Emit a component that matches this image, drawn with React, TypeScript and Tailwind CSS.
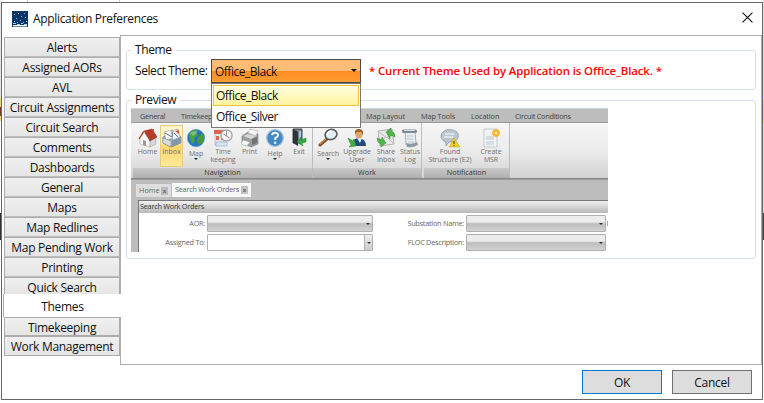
import React from "react";

const tabs = [
  ["Alerts", "h-5"], ["Assigned AORs", "h-5"], ["AVL", "h-5"], ["Circuit Assignments", "h-5"],
  ["Circuit Search", "h-5"], ["Comments", "h-5"], ["Dashboards", "h-5"], ["General", "h-5"],
  ["Maps", "h-5"], ["Map Redlines", "h-5"], ["Map Pending Work", "h-5"], ["Printing", "h-5"],
  ["Quick Search", "h-[17px]"], ["Themes", "h-[23px]"], ["Timekeeping", "h-[19px]"], ["Work Management", "h-5"],
];

const svg = "h-5 w-5 shrink-0";

const HomeIcon = () => (
  <svg viewBox="0 0 20 20" className={svg}>
    <path d="M2 10 6 5 12 12V19L2 16Z" fill="#fafafa" stroke="#aaa" strokeWidth=".6" />
    <path d="M12 12 18 9V16L12 19Z" fill="#d5d5d5" stroke="#999" strokeWidth=".5" />
    <path d="M6 3 14 1 19 9 12 13Z" fill="#b43d25" stroke="#8b2918" strokeWidth=".5" />
    <path d="M6 3 1 11" stroke="#a8472f" strokeWidth="1.4" />
    <path d="M5 12 8 13V18L5 17Z" fill="#999" /><path d="M14 1h2v3z" fill="#b85b45" />
  </svg>
);
const InboxIcon = () => (
  <svg viewBox="0 0 20 20" className={svg}>
    <path d="M1 9 12 5 19 9V15L9 19 1 15Z" fill="#9cabb5" stroke="#6f7d88" strokeWidth=".7" />
    <path d="M2 4 10 2 12 10 4 12Z" fill="#f8f8f8" stroke="#999" strokeWidth=".6" />
    <path d="M9 3 16 1 18 9 11 12Z" fill="#eef2f5" stroke="#7d96a8" strokeWidth=".6" />
    <path d="M3 5 10 9 11 3M12 5l4 4" stroke="#63788a" fill="none" />
    <path d="M13 3l4-1v4z" fill="#d4573c" /><path d="M1 10 9 13V19L1 15Z" fill="#d6dce0" stroke="#79858d" strokeWidth=".5" />
    <path d="M10 13 18 10V15L10 18Z" fill="#8297a7" />
  </svg>
);
const GlobeIcon = () => (
  <svg viewBox="0 0 20 20" className={svg}>
    <circle cx="10" cy="10" r="8.7" fill="#2675bf" stroke="#70a5c8" strokeWidth=".6" />
    <path d="M3 6Q7 1 12 2L10 5 12 7 8 10 9 13 6 16 4 11Z" fill="#49a443" />
    <path d="M12 9 17 5Q20 10 16 15L13 17 11 13Z" fill="#48993a" />
    <path d="M4 5Q8 2 12 4L7 8Z" fill="#9bd4b2" opacity=".6" />
  </svg>
);
const TimeIcon = () => (
  <svg viewBox="0 0 20 20" className={svg}>
    <path d="M2 2h9v15H2z" fill="#e7eaf0" stroke="#aaa" strokeWidth=".6" />
    <path d="M1 2h10v4H1zM3 8h3v4H3zM8 9h3v3H8z" fill="#dc6550" />
    <path d="M3 14h11v4H3z" fill="#d7e5f3" stroke="#89a5c5" strokeWidth=".6" />
    <circle cx="13.5" cy="7.5" r="5.5" fill="#f7f7f7" stroke="#a7a7a7" strokeWidth="1.4" />
    <path d="M13.5 3v5l3 2M13.5 8l-3-2" stroke="#777" strokeWidth=".8" fill="none" />
  </svg>
);
const PrintIcon = () => (
  <svg viewBox="0 0 20 20" className={svg}>
    <path d="M2 8 8 4 18 6V16L11 19 2 15Z" fill="#9b9e9f" stroke="#777" strokeWidth=".6" />
    <path d="M8 5 10 1 18 3 16 8Z" fill="#f6f6f6" stroke="#aaa" strokeWidth=".6" />
    <path d="M3 8 8 6 16 8 11 11Z" fill="#d5d7d8" /><path d="M3 12 10 14 7 18 1 16Z" fill="#fafafa" stroke="#999" strokeWidth=".5" />
    <path d="M12 11 17 9V15L12 17Z" fill="#6e7476" />
  </svg>
);
const HelpIcon = () => (
  <svg viewBox="0 0 20 20" className={svg}>
    <circle cx="10" cy="10" r="8.3" fill="#4189c7" stroke="#a2bfd6" strokeWidth="1.3" />
    <path d="M7 7.2Q7.5 4.5 10.5 4.7Q13.5 5 13 7.7Q12.6 9 10.3 10V12" fill="none" stroke="#fff" strokeWidth="1.9" />
    <circle cx="10.2" cy="14.8" r="1.2" fill="#fff" />
  </svg>
);
const ExitIcon = () => (
  <svg viewBox="0 0 20 20" className={svg}>
    <path d="M4 1h9v14H4z" fill="#6e8294" stroke="#444" /><path d="M4 1 9 4V18L4 15Z" fill="#303438" />
    <path d="M10 3h2v8h-2z" fill="#a8ccdd" /><path d="M17 10 12 12V9L8 14l6 4-1-3 4-1Z" fill="#38a641" stroke="#278735" strokeWidth=".5" />
  </svg>
);
const SearchIcon = () => (
  <svg viewBox="0 0 20 20" className={svg}>
    <path d="m9 11-7 6" stroke="#8b552b" strokeWidth="3" strokeLinecap="round" />
    <path d="m8 11-6 5" stroke="#d39a5c" strokeWidth="1" />
    <ellipse cx="13" cy="6.5" rx="6" ry="5" transform="rotate(-20 13 6.5)" fill="#e3edf4" stroke="#555b60" strokeWidth="1.6" />
    <path d="M9 7q1-4 5-4" stroke="#fff" strokeWidth="1.4" fill="none" />
  </svg>
);
const UserIcon = () => (
  <svg viewBox="0 0 20 20" className={svg}>
    <path d="M5 18Q5 10 12 10Q19 11 19 18Z" fill="#214d7c" /><path d="M10 10l3 5 2-5z" fill="#e8eef4" />
    <ellipse cx="12" cy="6" rx="3.8" ry="4.5" fill="#dea872" /><path d="M8 6Q7 1 12 1Q17 1 16 7L14 4 10 4Z" fill="#9c6728" />
    <path d="M1 10l5 3 1-2 2 7-7 1 2-2Z" fill="#42ac3d" stroke="#2a872b" strokeWidth=".5" />
  </svg>
);
const ShareIcon = () => (
  <svg viewBox="0 0 20 20" className={svg}>
    <path d="M2 3 16 1 18 16 4 18Z" fill="#e8e8e8" stroke="#999" strokeWidth=".7" /><path d="m3 4 8 6 5-8M4 17l5-8M17 15l-6-6" stroke="#aaa" strokeWidth=".7" fill="none" />
    <path d="m10 4 5-4v3q4 1 4 6-3-2-5-1v3Z M10 15l-5 4v-3q-4-1-4-6 3 2 5 1v-2Z" fill="#51b649" stroke="#318a31" strokeWidth=".5" />
  </svg>
);
const StatusIcon = () => (
  <svg viewBox="0 0 20 20" className={svg}>
    <path d="M5 3h10l1 13-10 1Z" fill="#e9edf0" stroke="#8795a0" strokeWidth=".7" />
    <rect x="2" y="1.5" width="15" height="3.5" rx="1.5" fill="#7d8a94" /><path d="M4 2.5h11" stroke="#d8dfe4" />
    <path d="M7 8h6M7 11h6M8 14h6" stroke="#aebac2" strokeWidth=".8" /><path d="M6 15q6 2 11-1l1 3q-5 3-11 2Z" fill="#8e9ba6" />
  </svg>
);
const FoundIcon = () => (
  <svg viewBox="0 0 20 20" className={svg}>
    <path d="M4 13Q-1 10 2 5Q6 0 13 2Q20 4 18 10Q16 14 9 14L6 18V14Z" fill="#bbc6cf" stroke="#8c9faf" strokeWidth=".8" />
    <path d="M5 6h9M4 9h9" stroke="#e9eef2" strokeWidth="1.3" /><path d="m14 10 6 9H9Z" fill="#f0d421" stroke="#c1a51c" strokeWidth=".6" />
    <path d="M14 13v3M14 17v1" stroke="#333" />
  </svg>
);
const CreateIcon = () => (
  <svg viewBox="0 0 20 20" className={svg}>
    <path d="M3 1h13v18H3z" fill="#f0f2f3" stroke="#b3babf" strokeWidth=".7" /><path d="M5 9h8M5 11h8M5 14h8M5 16h8" stroke="#b5c3cd" strokeWidth=".9" />
    <circle cx="15" cy="5" r="3.7" fill="#ffb82d" /><path d="M15 1v8M11 5h8M12.5 2.5l5 5M17.5 2.5l-5 5" stroke="#f5a61f" strokeWidth=".9" /><circle cx="15" cy="5" r="1.5" fill="#fff2a8" />
  </svg>
);

type Tool = { icon: () => React.JSX.Element; a: string; b?: string; w: string; arrow?: boolean; on?: boolean };
const nav: Tool[] = [
  { icon: HomeIcon, a: "Home", w: "w-[25px]" }, { icon: InboxIcon, a: "Inbox", w: "w-[23px]", on: true },
  { icon: GlobeIcon, a: "Map", w: "w-[26px]", arrow: true }, { icon: TimeIcon, a: "Time", b: "keeping", w: "w-[28px]" },
  { icon: PrintIcon, a: "Print", w: "w-[25px]" }, { icon: HelpIcon, a: "Help", w: "w-[26px]", arrow: true },
  { icon: ExitIcon, a: "Exit", w: "w-[22px]" },
];
const work: Tool[] = [
  { icon: SearchIcon, a: "Search", w: "w-[26px]", arrow: true }, { icon: UserIcon, a: "Upgrade", b: "User", w: "w-[32px]" },
  { icon: ShareIcon, a: "Share", b: "Inbox", w: "w-[26px]" }, { icon: StatusIcon, a: "Status", b: "Log", w: "w-[22px]" },
];
const notify: Tool[] = [
  { icon: FoundIcon, a: "Found", b: "Structure (E2)", w: "w-[48px]" }, { icon: CreateIcon, a: "Create", b: "MSR", w: "w-[34px]" },
];

function Group({ items, name, width }: { items: Tool[]; name: string; width: string }) {
  return (
    <div className={`flex h-[55px] shrink-0 flex-col border-r border-[#bcbcbc] ${width}`}>
      <div className="flex h-[45px] shrink-0 pl-0.5 pt-[2px]">
        {items.map((t) => (
          <div key={t.a} className={`flex h-[42px] shrink-0 flex-col items-center border pt-[2px] text-[7px] leading-[8px] tracking-[-.08px] whitespace-nowrap text-[#707070] ${t.w} ${t.on ? "border-[#e8cb7b] bg-linear-to-b from-[#fff4c9] from-40% via-[#ffd767] via-50% to-[#ffe998]" : "border-transparent"}`}>
            <t.icon />
            <span className={t.arrow ? "mt-[2px]" : ""}>{t.a}</span>
            {t.b && <span>{t.b}</span>}
            {t.arrow && <i className="border-x-2 border-t-2 border-x-transparent border-t-[#222]" />}
          </div>
        ))}
      </div>
      <div className="flex h-[10px] items-center justify-center bg-linear-to-b from-[#c8c8c8] to-[#b0b0b0] text-[7.3px] leading-none text-[#333]">{name}</div>
    </div>
  );
}

function Field({ white = false, w }: { white?: boolean; w: string }) {
  return (
    <div className={`flex h-[17px] shrink-0 justify-end rounded-[1px] border border-[#b0b0b0] ${w} ${white ? "bg-white" : "bg-linear-to-b from-[#ececec] from-40% via-[#bdbdbd] via-52% to-[#d3d3d3]"}`}>
      <div className={`flex w-2 items-center justify-center ${white ? "border-l border-[#b0b0b0] bg-linear-to-b from-[#eee] to-[#ccc]" : ""}`}>
        <i className="border-x-2 border-t-2 border-x-transparent border-t-[#333]" />
      </div>
    </div>
  );
}

function Preview() {
  return (
    <div className="flex h-[144px] w-[477px] flex-col overflow-hidden bg-[#bdbdbd] text-[7.3px] leading-none tracking-[-.25px] text-[#444]">
      <div className="flex h-[14px] items-center border-t border-[#cbd4da] pt-[3px] whitespace-nowrap">
        <span className="ml-[9px] w-[41px]">General</span><span className="w-[185px]">Timekeeping</span>
        <span className="w-[55px] tracking-[-.1px]">Map Layout</span><span className="w-[50px] tracking-[-.1px]">Map Tools</span><span className="w-[44px] tracking-[-.1px]">Location</span><span>Circuit Conditions</span>
      </div>
      <div className="flex h-[57px] shrink-0 border-t border-b border-t-[#999] border-b-[#888] bg-linear-to-b from-[#f6f6f6] via-[#ececec] to-[#d2d2d2] pl-[2px] tracking-normal">
        <Group items={nav} name="Navigation" width="w-[180px]" />
        <Group items={work} name="Work" width="w-[109px]" />
        <div className="w-[2px]" />
        <Group items={notify} name="Notification" width="w-[86px]" />
      </div>
      <div className="flex h-[18px] shrink-0 items-end border-t border-[#999] pl-[5px]">
        <div className="flex h-[13px] w-[35px] items-center justify-between bg-[#dedede] px-[3px] text-[#666]"><span className="tracking-normal">Home</span><b className="bg-[#bbb] px-[2px] text-[6px] leading-[8px]">x</b></div>
        <div className="ml-px flex h-[14px] w-[79px] items-center justify-between bg-[#f7f7f7] px-[3px] text-[#666] whitespace-nowrap"><span>Search Work Orders</span><b className="bg-[#c4c4c4] px-[2px] text-[6px] leading-[8px]">x</b></div>
      </div>
      <div className="flex-1 pt-[3px] pl-[7px]">
        <div className="h-full border-t border-l border-[#777] bg-white">
          <div className="flex h-3 items-center bg-linear-to-b from-[#f1f1f1] to-[#b8b8b8] pl-px text-[#333]">Search Work Orders</div>
          <div className="mt-[2px] flex flex-col gap-[2px]">
            {[["AOR:", "Substation Name:"], ["Assigned To:", "FLOC Description:"]].map(([a, b], i) => (
              <div key={a} className="flex items-center whitespace-nowrap text-[#666]">
                <span className="w-[66px] text-right">{a}</span><span className="w-[2px]" /><Field w="w-[166px]" white={i === 1} />
                <span className="w-[91px] text-right">{b}</span><span className="w-[2px]" /><Field w="w-[140px]" />
                {i === 0 && <span className="ml-[1px] h-[5px] w-px bg-[#df967a]" />}
              </div>
            ))}
          </div>
        </div>
      </div>
    </div>
  );
}

export default function App() {
  return (
    <div className="flex h-[403px] w-[764px] overflow-hidden bg-white font-['Open_Sans','Noto_Sans',sans-serif] text-[12px] leading-4 text-[#111]">
      <aside className="flex w-px shrink-0 flex-col">
        <i className="h-[98px] bg-[#e5e5e5]" /><i className="h-[9px] bg-[#efd582]" /><i className="h-[9px] bg-[#753b35]" /><i className="h-[5px] bg-[#f2d777]" /><i className="h-[92px]" /><i className="h-[27px] bg-[#333]" />
      </aside>
      <div className="flex w-[762px] shrink-0 flex-col">
        <div className="flex h-0.5 pl-[26px]"><i className="h-full w-[93px] border-x border-[#ccc]" /></div>
        <main className="flex h-[398px] flex-col border border-[#68686c] bg-white">
          <header className="flex h-8 shrink-0 items-center pl-[10px] pr-[9px]">
            <svg viewBox="0 0 16 16" className="mb-px h-4 w-4">
              <rect width="16" height="16" fill="#063566" />
              <g fill="#86b8ee"><path d="M2 3h1v1H2zM6 2h1v1H6zM12 2h1v1h-1zM9 5h1v1H9zM4 7h1v1H4zM8 9h1v1H8zM13 6h1v1h-1zM11 11h1v1h-1zM2 10h1v1H2zM5 11h1v1H5zM14 10h1v1h-1z" /></g>
              <path d="M1 12.5h3M5 13.5h3M9 12.5h2M12 13.5h3" stroke="#b9cce0" /><path d="M1 14.7h14" stroke="#fff" strokeWidth="1.4" />
            </svg>
            <h1 className="ml-[5px] text-[12px] tracking-[-.33px]">Application Preferences</h1>
            <svg viewBox="0 0 10 10" className="mb-[3px] ml-auto h-[11px] w-[11px]"><path d="m.5.5 9 9m0-9-9 9" stroke="#111" fill="none" /></svg>
          </header>
          <div className="flex h-[330px] shrink-0 pl-px">
            <nav className="flex w-[117px] shrink-0 flex-col pt-[2px] tracking-[-.3px]">
              {tabs.map(([t, h], i) => (
                <div key={t} className={`flex shrink-0 items-center justify-center whitespace-nowrap ${h} ${t === "Themes" ? "relative z-10 w-[118px] border-l border-[#acacac] bg-white pt-[3px]" : `ml-px border border-[#acacac] bg-linear-to-b from-[#f0f0f0] to-[#e5e5e5] pt-[2px] ${i === 12 ? "border-b-0 pt-[3px]" : ""} ${i < 12 ? "border-b-[#bdbdbd]" : ""}`}`}>{t}</div>
              ))}
            </nav>
            <section className="flex w-[642px] flex-col border border-[#acacac] px-[5px] pt-[6px]">
              <fieldset className="h-[48px] w-[630px] rounded-[3px] border border-[#d5dfe5]">
                <legend className="ml-1 h-4 px-1 tracking-[-.4px]">Theme</legend>
                <div className="mt-px flex items-center pl-2">
                  <span className="w-[76px] tracking-[-.42px] whitespace-nowrap">Select Theme:</span>
                  <div className="relative h-6 w-[150px] tracking-[-.5px]">
                    <div className="flex h-full items-center justify-between border border-[#4b4b4b] bg-linear-to-b from-[#ffbc76] from-48% via-[#ff8b22] via-50% to-[#ff9d32] px-[3px]">
                      <span className="pt-px">Office_Black</span><i className="mb-px border-x-[3px] border-t-[3px] border-x-transparent border-t-black" />
                    </div>
                    <div className="absolute top-6 left-0 z-20 h-[45px] w-[150px] border border-[#777] bg-white p-px">
                      <div className="flex h-[21px] items-center border border-[#f5c43d] bg-linear-to-b from-[#fffde0] to-[#fff39b] pl-[2px] pt-px">Office_Black</div>
                      <div className="flex h-[21px] items-center pl-[3px] pt-px">Office_Silver</div>
                    </div>
                  </div>
                  <b className="ml-2 text-[11.4px] font-semibold tracking-[-.1px] whitespace-nowrap text-[#f00]">* Current Theme Used by Application is Office_Black. *</b>
                </div>
              </fieldset>
              <fieldset className="mt-[2px] h-[167px] w-[630px] rounded-[3px] border border-[#d5dfe5]">
                <legend className="ml-1 h-4 px-1 tracking-[-.4px]">Preview</legend>
                <div className="ml-1"><Preview /></div>
              </fieldset>
            </section>
          </div>
          <footer className="flex justify-end gap-[10px] pt-[5px] pr-[10px] tracking-[-.3px]">
            <button className="h-6 w-20 border border-[#0078d7] bg-[#ddd] pt-px">OK</button>
            <button className="h-6 w-20 border border-[#707070] bg-[#ddd] pt-px">Cancel</button>
          </footer>
        </main>
      </div>
      <aside className="flex w-px flex-col"><i className="h-[99px] bg-[#ddd]" /><i className="h-[24px] bg-[#f3d16a]" /><i className="h-[90px] bg-[#ddd]" /><i className="h-[27px] bg-[#444]" /></aside>
    </div>
  );
}
